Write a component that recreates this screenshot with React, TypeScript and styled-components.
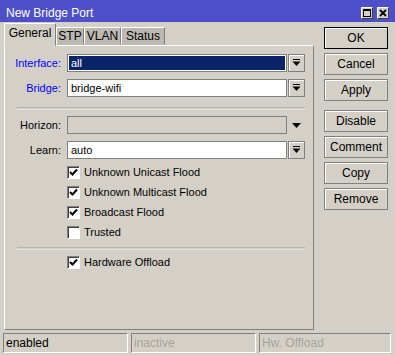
import styled, { createGlobalStyle } from 'styled-components';

const GlobalStyle = createGlobalStyle`
    html, body {
        margin: 0;
        padding: 0;
        background: #d4d0c8;
    }
    body {
        font-family: "Liberation Sans", Arial, sans-serif;
        font-size: 11px;
        color: #000;
    }
`

const Window = styled.div`
    width: 395px;
    height: 355px;
    display: flex;
    flex-direction: column;
    background: #d4d0c8;
    overflow: hidden;
`
const TitleBar = styled.div`
    height: 22px;
    box-sizing: border-box;
    padding: 3px 6px 0 6px;
    background: #4d50c8;
    color: #fff;
    font-size: 12px;
    display: flex;
    align-items: center;
`
const TitleText = styled.div`
    flex: 1;
`
const WinButton = styled.div`
    width: 12px;
    height: 12px;
    box-sizing: border-box;
    margin-left: 4px;
    background: #d4d0c8;
    border: 1px solid #404040;
    border-color: #fff #404040 #404040 #fff;
    display: flex;
    align-items: center;
    justify-content: center;
`
const Main = styled.div`
    flex: 1;
    display: flex;
`
const LeftPane = styled.div`
    width: 310px;
    margin-left: 4px;
    display: flex;
    flex-direction: column;
`
const TabRow = styled.div`
    height: 22px;
    margin-top: 1px;
    display: flex;
    align-items: flex-end;
`
const Tab = styled.div<{ $active?: boolean; $w: number }>`
    box-sizing: border-box;
    width: ${p => p.$w}px;
    height: ${p => (p.$active ? '23px' : '18px')};
    margin-bottom: ${p => (p.$active ? '-1px' : '0')};
    padding-bottom: ${p => (p.$active ? '3px' : '0')};
    background: ${p => (p.$active ? '#d4d0c8' : '#bdb9b1')};
    border: 1px solid;
    border-color: #fff #808080 transparent #fff;
    font-size: 12px;
    display: flex;
    align-items: center;
    justify-content: center;
    position: relative;
    z-index: ${p => (p.$active ? 1 : 0)};
`
const Panel = styled.div`
    flex: 1;
    box-sizing: border-box;
    border-top: 1px solid #fff;
    border-left: 1px solid #fff;
    border-right: 1px solid #808080;
    border-bottom: 1px solid #808080;
    padding: 8px 8px 0 0;
    display: flex;
    flex-direction: column;
`
const FieldRow = styled.div`
    height: 18px;
    margin-bottom: 7px;
    display: flex;
    align-items: center;
`
const Label = styled.div<{ $blue?: boolean }>`
    width: 56px;
    margin-right: 6px;
    text-align: right;
    color: ${p => (p.$blue ? '#0000ff' : '#000')};
`
const Field = styled.div<{ $selected?: boolean; $disabled?: boolean }>`
    flex: 1;
    height: 18px;
    box-sizing: border-box;
    border: 1px solid #808080;
    background: ${p => (p.$selected ? '#0a246a' : p.$disabled ? '#d4d0c8' : '#fff')};
    color: ${p => (p.$selected ? '#fff' : '#000')};
    box-shadow: ${p => (p.$selected ? 'inset 0 0 0 1px #fff' : 'none')};
    padding-left: 3px;
    display: flex;
    align-items: center;
`
const DropButton = styled.div`
    width: 17px;
    height: 18px;
    margin-left: 1px;
    box-sizing: border-box;
    border: 1px solid #808080;
    box-shadow: inset 1px 1px 0 #fff;
    display: flex;
    align-items: center;
    justify-content: center;
`
const PlainArrow = styled.div`
    width: 17px;
    margin-left: 1px;
    display: flex;
    align-items: center;
    justify-content: center;
`
const Separator = styled.div<{ $top: number; $bottom: number }>`
    height: 1px;
    margin: ${p => p.$top}px 0 ${p => p.$bottom}px 12px;
    border-top: 1px solid #b9b5ad;
    border-bottom: 1px solid #e8e6e2;
`
const CheckRow = styled.div`
    height: 20px;
    padding-left: 62px;
    display: flex;
    align-items: center;
`
const Box = styled.div`
    width: 13px;
    height: 13px;
    box-sizing: border-box;
    margin-right: 4px;
    background: #fff;
    border: 1px solid;
    border-color: #808080 #fff #fff #808080;
    box-shadow: inset 1px 1px 0 #404040;
    display: flex;
    align-items: center;
    justify-content: center;
`
const RightPane = styled.div`
    margin-left: 10px;
    padding-top: 5px;
    display: flex;
    flex-direction: column;
`
const Button = styled.div<{ $default?: boolean; $gap?: number }>`
    width: 64px;
    height: 22px;
    box-sizing: border-box;
    margin-bottom: ${p => p.$gap ?? 4}px;
    border: 1px solid ${p => (p.$default ? '#000' : '#808080')};
    box-shadow: inset 1px 1px 0 #fff;
    display: flex;
    align-items: center;
    justify-content: center;
    font-size: 12px;
`
const StatusBar = styled.div`
    height: 25px;
    box-sizing: border-box;
    padding: 3px 0 2px 3px;
    display: flex;
    gap: 3px;
`
const StatusCell = styled.div<{ $w: number; $dim?: boolean }>`
    width: ${p => p.$w}px;
    box-sizing: border-box;
    border: 1px solid;
    border-color: #808080 #fff #fff #808080;
    padding-left: 2px;
    display: flex;
    align-items: center;
    font-size: 12px;
    color: ${p => (p.$dim ? '#a8a49c' : '#000')};
`

const DropIcon = () => (
    <svg width="9" height="8" viewBox="0 0 9 8">
        <rect x="1" y="0" width="7" height="1" fill="#000" />
        <polygon points="0.5,2.5 8.5,2.5 4.5,7" fill="#000" />
    </svg>
)

const Check = () => (
    <svg width="9" height="9" viewBox="0 0 9 9">
        <polyline points="1,4 3.5,6.5 8,1.5" fill="none" stroke="#000" strokeWidth="2" />
    </svg>
)

const CheckItem = ({ label, checked }: { label: string; checked?: boolean }) => (
    <CheckRow>
        <Box>{checked && <Check />}</Box>
        <span>{label}</span>
    </CheckRow>
)

const App = () => {
    return (
        <Window>
            <GlobalStyle />
            <TitleBar>
                <TitleText>New Bridge Port</TitleText>
                <WinButton>
                    <svg width="8" height="8" viewBox="0 0 8 8">
                        <rect x="0.5" y="0.5" width="7" height="7" fill="none" stroke="#000" />
                        <rect x="0" y="0" width="8" height="2" fill="#000" />
                    </svg>
                </WinButton>
                <WinButton>
                    <svg width="8" height="8" viewBox="0 0 8 8">
                        <path d="M1 1 L7 7 M7 1 L1 7" stroke="#000" strokeWidth="1.8" />
                    </svg>
                </WinButton>
            </TitleBar>
            <Main>
                <LeftPane>
                    <TabRow>
                        <Tab $active $w={52}>General</Tab>
                        <Tab $w={28}>STP</Tab>
                        <Tab $w={37}>VLAN</Tab>
                        <Tab $w={44}>Status</Tab>
                    </TabRow>
                    <Panel>
                        <FieldRow>
                            <Label $blue>Interface:</Label>
                            <Field $selected>all</Field>
                            <DropButton><DropIcon /></DropButton>
                        </FieldRow>
                        <FieldRow>
                            <Label $blue>Bridge:</Label>
                            <Field>bridge-wifi</Field>
                            <DropButton><DropIcon /></DropButton>
                        </FieldRow>
                        <Separator $top={3} $bottom={6} />
                        <FieldRow>
                            <Label>Horizon:</Label>
                            <Field $disabled />
                            <PlainArrow>
                                <svg width="9" height="5" viewBox="0 0 9 5">
                                    <polygon points="0,0 9,0 4.5,5" fill="#000" />
                                </svg>
                            </PlainArrow>
                        </FieldRow>
                        <FieldRow>
                            <Label>Learn:</Label>
                            <Field>auto</Field>
                            <DropButton><DropIcon /></DropButton>
                        </FieldRow>
                        <div style={{ marginTop: -4 }} />
                        <CheckItem label="Unknown Unicast Flood" checked />
                        <CheckItem label="Unknown Multicast Flood" checked />
                        <CheckItem label="Broadcast Flood" checked />
                        <CheckItem label="Trusted" />
                        <Separator $top={5} $bottom={2} />
                        <CheckItem label="Hardware Offload" checked />
                    </Panel>
                </LeftPane>
                <RightPane>
                    <Button $default>OK</Button>
                    <Button>Cancel</Button>
                    <Button $gap={9}>Apply</Button>
                    <Button>Disable</Button>
                    <Button>Comment</Button>
                    <Button>Copy</Button>
                    <Button>Remove</Button>
                </RightPane>
            </Main>
            <StatusBar>
                <StatusCell $w={125}>enabled</StatusCell>
                <StatusCell $w={125} $dim>inactive</StatusCell>
                <StatusCell $w={132} $dim>Hw. Offload</StatusCell>
            </StatusBar>
        </Window>
    )
}

export default App
